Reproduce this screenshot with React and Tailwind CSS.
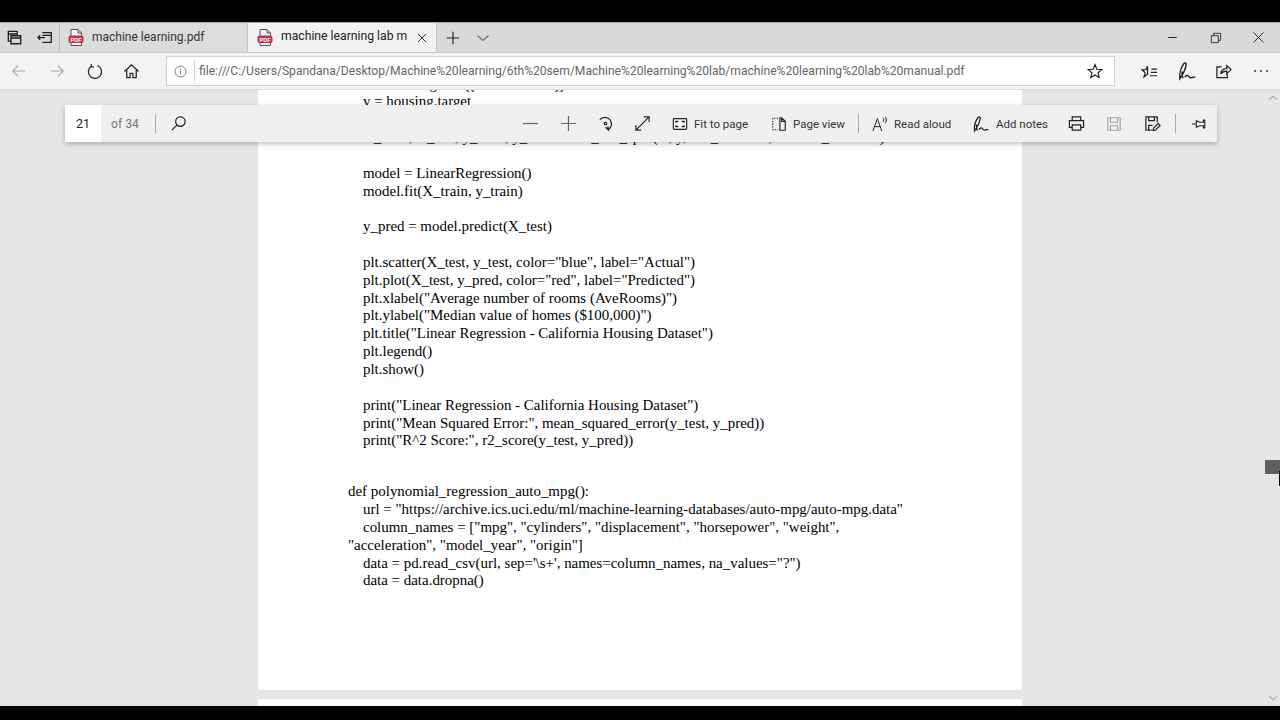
import React from "react";

const Icon = ({ size = 18, children, className = "", color = "#222", sw = 1.3 }) => (
  <svg width={size} height={size} viewBox="0 0 18 18" fill="none" stroke={color} strokeWidth={sw} className={"shrink-0 " + className}>
    {children}
  </svg>
);

const PdfIcon = () => (
  <svg width="16" height="17" viewBox="0 0 16 17" className="shrink-0">
    <path d="M3 .5h7l3.500 3.500v12.500H3z" fill="#f4f4f4" stroke="#555" />
    <path d="M10 .5V4h3.500" fill="none" stroke="#555" />
    <rect x="0.500" y="6.500" width="15" height="7.500" rx="2" fill="#c4314b" />
    <text x="8" y="12.500" textAnchor="middle" fontSize="5.500" fontWeight="700" fill="#fff" fontFamily="'Liberation Sans', sans-serif">PDF</text>
  </svg>
);

const PenIcon = ({ size = 20 }) => (
  <Icon size={size}>
    <path d="M2.500 16C2 12 3.500 6 6 2.500c.8-1 2-.8 2.300.3C8 6 6 11 2.500 16zM4.500 9.500C4.300 12 4.600 14 5.500 15.500" />
    <path d="M7 14.500c1.200-1.500 2.200-2 3-1.200s1.300 2 2.500 1.800 2-.8 4-.5" />
  </Icon>
);

const LINES_TOP = [
  'X = housing.data[["AveRooms"]]',
  "y = housing.target",
  "",
  "X_train, X_test, y_train, y_test = train_test_split(X, y, test_size=0.2, random_state=42)",
  "",
  "model = LinearRegression()",
  "model.fit(X_train, y_train)",
  "",
  "y_pred = model.predict(X_test)",
  "",
  'plt.scatter(X_test, y_test, color="blue", label="Actual")',
  'plt.plot(X_test, y_pred, color="red", label="Predicted")',
  'plt.xlabel("Average number of rooms (AveRooms)")',
  'plt.ylabel("Median value of homes ($100,000)")',
  'plt.title("Linear Regression - California Housing Dataset")',
  "plt.legend()",
  "plt.show()",
  "",
  'print("Linear Regression - California Housing Dataset")',
  'print("Mean Squared Error:", mean_squared_error(y_test, y_pred))',
  'print("R^2 Score:", r2_score(y_test, y_pred))',
];

const LINES_BOTTOM = [
  { t: "def polynomial_regression_auto_mpg():", flush: true },
  { t: 'url = "https://archive.ics.uci.edu/ml/machine-learning-databases/auto-mpg/auto-mpg.data"' },
  { t: 'column_names = ["mpg", "cylinders", "displacement", "horsepower", "weight",' },
  { t: '"acceleration", "model_year", "origin"]', flush: true },
  { t: "data = pd.read_csv(url, sep='\\s+', names=column_names, na_values=\"?\")" },
  { t: "data = data.dropna()" },
];

const ToolBtn = ({ children, w = "w-[38px]" }) => (
  <div className={"flex items-center justify-center shrink-0 " + w}>{children}</div>
);

const ToolLabel = ({ icon, label, w }) => (
  <div className={"flex items-center shrink-0 gap-[6px] " + w}>
    {icon}
    <span className="pt-[2px] text-[11.500px] text-[#333] whitespace-nowrap">{label}</span>
  </div>
);

const App = () => {
  return (
    <div className="w-[1280px] h-[720px] flex flex-col bg-black overflow-hidden font-['Roboto',sans-serif]">
      <div className="h-[22px] bg-black shrink-0" />

      {/* tab strip */}
      <div className="h-[30px] shrink-0 flex items-stretch bg-[#d9d9d9] border-t border-[#a8a8a8]">
        <div className="w-[60px] shrink-0 flex items-center border-r border-[#bdbdbd]">
          <ToolBtn w="w-[30px]">
            <Icon size={16} sw={1.500}>
              <path d="M1.500 1.500h10v3h-10zM1.500 4.500v8h3M4.500 6.500h11v9h-11zM4.500 9h11" />
            </Icon>
          </ToolBtn>
          <ToolBtn w="w-[30px]">
            <Icon size={16} sw={1.500}>
              <path d="M6 3h10v11H6M6 6h10M1 8.500h8M3.500 6 1 8.500 3.500 11" />
            </Icon>
          </ToolBtn>
        </div>
        <div className="w-[187px] shrink-0 flex items-center pl-[8px] gap-[8px] bg-[#dcdcdc] text-[12px] text-[#333]">
          <PdfIcon />
          <span className="pb-[2px] whitespace-nowrap">machine learning.pdf</span>
        </div>
        <div className="w-[190px] shrink-0 flex items-center pl-[9px] gap-[8px] bg-[#f2f2f2] border-x border-[#c4c4c4] text-[12.200px] text-[#222]">
          <PdfIcon />
          <span className="pb-[2px] whitespace-nowrap">machine learning lab m</span>
          <Icon size={12} className="ml-[1px]" sw={1.400}>
            <path d="M3 3l12 12M15 3 3 15" />
          </Icon>
        </div>
        <ToolBtn w="w-[32px]">
          <Icon size={16}>
            <path d="M9 2v14M2 9h14" />
          </Icon>
        </ToolBtn>
        <ToolBtn w="w-[28px]">
          <Icon size={14} color="#555">
            <path d="M2 6l7 6 7-6" />
          </Icon>
        </ToolBtn>
        <div className="flex-1" />
        <ToolBtn w="w-[43px]">
          <Icon size={11} sw={1.600}>
            <path d="M2 9h14" />
          </Icon>
        </ToolBtn>
        <ToolBtn w="w-[43px]">
          <Icon size={12}>
            <path d="M2 5.500h10.500V16H2zM5.500 5.500V2H16v10.500h-3.500" />
          </Icon>
        </ToolBtn>
        <ToolBtn w="w-[43px]">
          <Icon size={13}>
            <path d="M2 2l14 14M16 2 2 16" />
          </Icon>
        </ToolBtn>
      </div>

      {/* nav bar */}
      <div className="h-[38px] shrink-0 flex items-center bg-[#f3f3f3] border-t border-[#c9c9c9] border-b border-b-[#dcdcdc]">
        <ToolBtn w="w-[38px]">
          <Icon size={16} color="#a9a9a9">
            <path d="M16 9H2M8 3 2 9l6 6" />
          </Icon>
        </ToolBtn>
        <ToolBtn w="w-[38px]">
          <Icon size={16} color="#a9a9a9">
            <path d="M2 9h14M10 3l6 6-6 6" />
          </Icon>
        </ToolBtn>
        <ToolBtn w="w-[36px]">
          <Icon size={17}>
            <path d="M5.500 3.500A7 7 0 1 0 12 2.700M5.500 1v3h3" />
          </Icon>
        </ToolBtn>
        <ToolBtn w="w-[38px]">
          <Icon size={17}>
            <path d="M1.500 9 9 2l7.500 7M4 7v8.500h3.500V11h3v4.500H14V7" />
          </Icon>
        </ToolBtn>
        <div className="ml-[16px] w-[949px] shrink-0 h-[30px] flex items-center bg-white border border-[#d2d2d2]">
          <ToolBtn w="w-[27px]">
            <Icon size={13} color="#777">
              <circle cx="9" cy="9" r="7.500" />
              <path d="M9 8v5M9 5v1.500" />
            </Icon>
          </ToolBtn>
          <div className="w-px h-[22px] bg-[#d5d5d5]" />
          <span className="ml-[4px] text-[12.100px] text-[#666] whitespace-nowrap flex-1">
            file:///C:/Users/Spandana/Desktop/Machine%20learning/6th%20sem/Machine%20learning%20lab/machine%20learning%20lab%20manual.pdf
          </span>
          <ToolBtn w="w-[38px]">
            <Icon size={16}>
              <path d="M9 1.800 11.100 7l5.500.4-4.200 3.500 1.300 5.400L9 13.400l-4.700 2.900 1.300-5.400L1.400 7.400 6.900 7z" />
            </Icon>
          </ToolBtn>
        </div>
        <ToolBtn w="w-[16px]" />
        <ToolBtn w="w-[37px]">
          <Icon size={17}>
            <path d="M7 3.500v8.300l-3.800 3 1.200-4.600L1 7.200l4.300-.2zM11 6.500h6M10.500 10h6.500M9.500 13.500H17" />
          </Icon>
        </ToolBtn>
        <ToolBtn w="w-[37px]">
          <PenIcon />
        </ToolBtn>
        <ToolBtn w="w-[37px]">
          <Icon size={17}>
            <path d="M7 4H2v11.500h11V12M6 11.500c.5-3.500 3-5.500 6.500-5.500V2.800L17 7l-4.500 4.200V8.500c-2.800 0-5 1-6.500 3z" />
          </Icon>
        </ToolBtn>
        <ToolBtn w="w-[38px]">
          <div className="flex gap-[4px]">
            <div className="w-[2px] h-[2px] rounded-full bg-[#333]" />
            <div className="w-[2px] h-[2px] rounded-full bg-[#333]" />
            <div className="w-[2px] h-[2px] rounded-full bg-[#333]" />
          </div>
        </ToolBtn>
      </div>

      {/* pdf viewer */}
      <div className="relative h-[616px] shrink-0 bg-[#e6e6e6] overflow-hidden flex flex-col items-center">
        <div className="w-[764px] h-[600px] shrink-0 bg-white overflow-hidden pl-[90px] font-['Liberation_Serif',serif] text-[14.950px] leading-[17.850px] text-black">
          <div className="-mt-[14.500px] pl-[15px]">
            {LINES_TOP.map((line, i) => (
              <div key={i} className="h-[17.850px] whitespace-pre">
                {line}
              </div>
            ))}
          </div>
          <div className="mt-[33px]">
            {LINES_BOTTOM.map((line, i) => (
              <div key={i} className={"h-[17.850px] whitespace-pre " + (line.flush ? "" : "pl-[15px]")}>
                {line.t}
              </div>
            ))}
          </div>
        </div>
        <div className="w-[764px] h-[7px] mt-[9px] shrink-0 bg-white" />

        {/* floating toolbar */}
        <div className="absolute left-[65px] top-[15px] w-[1152px] h-[37px] flex items-center bg-[#f0f0f0] shadow-[0_2px_5px_rgba(0,0,0,0.25)]">
          <div className="w-[36px] shrink-0 h-full bg-white flex items-center justify-center pt-[2px] text-[12.500px] text-[#222]">21</div>
          <span className="ml-[10px] w-[44px] shrink-0 pt-[2px] text-[12.200px] text-[#777]">of 34</span>
          <div className="w-px shrink-0 h-[19px] bg-[#aaa]" />
          <ToolBtn w="w-[45px]">
            <Icon size={17}>
              <circle cx="11" cy="7" r="5" />
              <path d="M7.500 10.500 2 16" />
            </Icon>
          </ToolBtn>
          <div className="w-[310px] shrink-0" />
          <ToolBtn>
            <Icon size={17} color="#666">
              <path d="M1 9h16" />
            </Icon>
          </ToolBtn>
          <ToolBtn>
            <Icon size={17} color="#666">
              <path d="M1 9h16M9 1v16" />
            </Icon>
          </ToolBtn>
          <ToolBtn w="w-[37px]">
            <Icon size={17}>
              <path d="M3 5a7 7 0 1 1 9 10.500M9 13l3 2.700-.5-3.700" />
              <circle cx="9" cy="9" r="1.300" />
            </Icon>
          </ToolBtn>
          <ToolBtn w="w-[37px]">
            <Icon size={17} sw={1.200}>
              <path d="M2 16 16 2M10.500 2H16v5.500M2 10.500V16h5.500" />
            </Icon>
          </ToolBtn>
          <div className="w-[11px] shrink-0" />
          <ToolLabel
            w="w-[99px]"
            label="Fit to page"
            icon={
              <Icon size={16}>
                <rect x="1.500" y="3" width="15" height="12" rx="1" />
                <path d="M4.500 8V6h2.500M13.500 8V6H11M4.500 10v2H7M13.500 10v2H11" />
              </Icon>
            }
          />
          <ToolLabel
            w="w-[87px]"
            label="Page view"
            icon={
              <Icon size={16}>
                <path d="M10 2v14h6V6l-4-4zM12 2v4h4" />
                <path d="M8 2.500H2v13h6" strokeDasharray="1.500 1.500" />
              </Icon>
            }
          />
          <div className="w-px shrink-0 h-[19px] bg-[#aaa] mr-[13px]" />
          <ToolLabel
            w="w-[100px]"
            label="Read aloud"
            icon={
              <Icon size={16} sw={1.100}>
                <path d="M1 17 6 3l5 14M2.800 12h6.500M12.500 2c1 1.500 1 3 0 4.500M15 1c1.500 2.500 1.500 4.500 0 7" />
              </Icon>
            }
          />
          <ToolLabel w="w-[85px]" label="Add notes" icon={<PenIcon size={18} />} />
          <ToolBtn>
            <Icon size={17}>
              <path d="M4.500 6V2h9v4M4.500 13H1.500V6h15v7h-3M4.500 10.500h9V16h-9z" />
            </Icon>
          </ToolBtn>
          <ToolBtn>
            <Icon size={16} color="#a5a5a5">
              <path d="M2 2h14v14H2zM5 2v5h8V2M5 16v-5h8v5" />
            </Icon>
          </ToolBtn>
          <ToolBtn>
            <Icon size={17}>
              <path d="M8 16H2V2h12v6M5 2v4h6V2M5 16v-5h4" />
              <path d="M9.500 16.500 10 14l5-5 2 2-5 5z" />
            </Icon>
          </ToolBtn>
          <div className="w-[4px] shrink-0" />
          <div className="w-px shrink-0 h-[19px] bg-[#aaa]" />
          <ToolBtn w="w-[41px] ml-[2px]">
            <Icon size={16}>
              <path d="M1 9h5M6 5.500l4 1.500h4V4.500h1.500v9H14V11h-4l-4 1.500z" />
            </Icon>
          </ToolBtn>
        </div>

        {/* scrollbar */}
        <div className="absolute right-[2px] top-[3px]">
          <Icon size={10} color="#777">
            <path d="M2 12l7-6 7 6" />
          </Icon>
        </div>
        <div className="absolute right-0 top-[370px] w-[15px] h-[14px] bg-[#5f5f5f]" />
        <div className="absolute right-0 top-[381px] w-[1px] h-[15px] bg-black" />
        <div className="absolute right-[2px] bottom-[3px]">
          <Icon size={10} color="#777">
            <path d="M2 6l7 6 7-6" />
          </Icon>
        </div>
      </div>

      <div className="flex-1 bg-black" />
    </div>
  );
};

export default App;
